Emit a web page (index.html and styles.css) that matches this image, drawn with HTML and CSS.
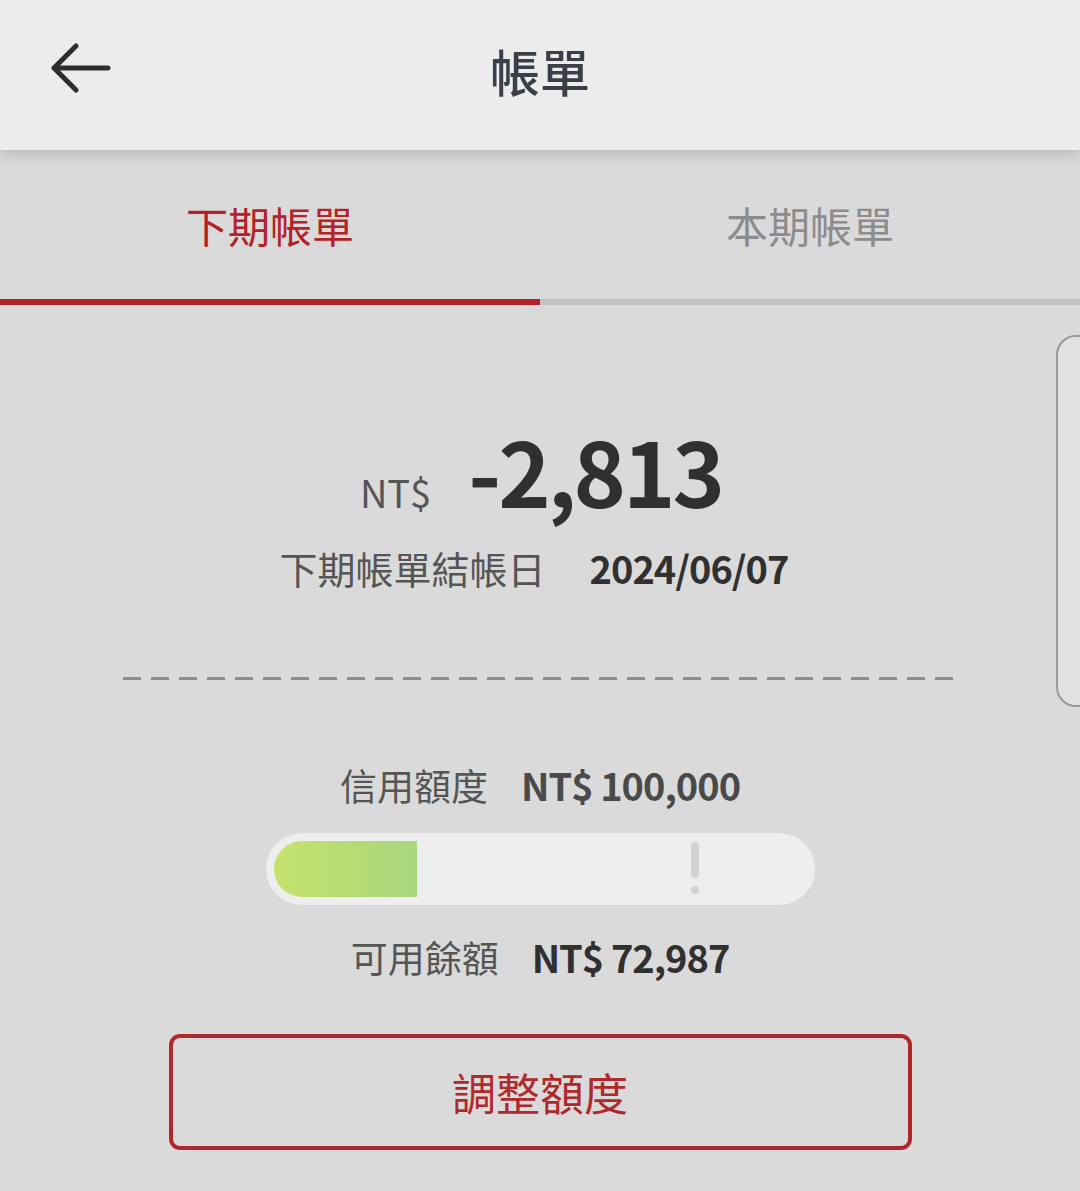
FILE: index.html
```html
<!DOCTYPE html>
<html lang="zh-Hant">
<head>
    <meta charset="UTF-8">
    <meta name="viewport" content="width=device-width, initial-scale=1.0">
    <title>帳單</title>
    <link rel="stylesheet" href="styles.css">
</head>
<body>
    <header class="topbar">
        <div class="topbar-left">
            <svg class="back-icon" width="60" height="50" viewBox="0 0 60 50">
                <path d="M3 25 H57 M25 3 L3 25 L25 47" fill="none" stroke="#2e2e2e" stroke-width="5" stroke-linecap="round" stroke-linejoin="round"/>
            </svg>
        </div>
        <h1 class="title">帳單</h1>
        <div></div>
    </header>

    <nav class="tabs">
        <div class="tab active">下期帳單</div>
        <div class="tab">本期帳單</div>
    </nav>

    <main class="content">
        <div class="peek-card"></div>

        <div class="amount-row">
            <span class="currency">NT$</span>
            <span class="amount">-2,813</span>
        </div>
        <div class="due-row">
            <span class="label">下期帳單結帳日</span>
            <span class="value">2024/06/07</span>
        </div>

        <div class="divider"></div>

        <div class="limit-row">
            <span class="label">信用額度</span>
            <span class="value muted">NT$ 100,000</span>
        </div>
        <div class="bar">
            <div class="bar-fill" style="width: 27%"></div>
            <span class="bar-mark"></span>
        </div>
        <div class="limit-row">
            <span class="label">可用餘額</span>
            <span class="value">NT$ 72,987</span>
        </div>

        <button class="adjust-btn">調整額度</button>
    </main>
</body>
</html>
```

FILE: styles.css
```css
body {
    margin: 0;
    font-family: "Noto Sans CJK TC", "Noto Sans", sans-serif;
    background-color: #dadada;
    color: #333;
    width: 1080px;
    height: 1191px;
    overflow: hidden;
}
.topbar {
    height: 150px;
    background-color: #ececec;
    display: grid;
    grid-template-columns: 1fr auto 1fr;
    align-items: center;
    box-shadow: 0 4px 14px rgba(0, 0, 0, 0.16);
    position: relative;
    z-index: 2;
}
.topbar-left {
    padding-left: 51px;
    display: flex;
    align-items: center;
    padding-bottom: 14px;
}
.title {
    margin: 0;
    font-size: 50px;
    font-weight: 500;
    color: #3a4048;
    line-height: 1;
    padding-bottom: 10px;
}
.tabs {
    display: flex;
    height: 155px;
}
.tab {
    flex: 1;
    display: flex;
    align-items: center;
    justify-content: center;
    font-size: 42px;
    color: #8c8c8c;
    border-bottom: 6px solid #c2c2c2;
}
.tab.active {
    color: #b52226;
    border-bottom-color: #b52226;
}
.content {
    position: relative;
    display: flex;
    flex-direction: column;
    align-items: center;
    padding-top: 120px;
}
.peek-card {
    position: absolute;
    top: 30px;
    right: -30px;
    width: 50px;
    height: 368px;
    border: 2px solid #999;
    border-radius: 20px;
    background-color: #e1e1e1;
}
.amount-row {
    display: flex;
    align-items: baseline;
    gap: 37px;
    line-height: 1;
    margin-left: 2px;
}
.currency {
    font-size: 38px;
    color: #555;
}
.amount {
    font-size: 89px;
    font-weight: 700;
    color: #303030;
    letter-spacing: -3px;
}
.due-row {
    display: flex;
    align-items: baseline;
    gap: 44px;
    margin-top: 35px;
    margin-left: -12px;
    line-height: 1;
}
.label {
    font-size: 37px;
    color: #555;
}
.due-row .label {
    font-size: 38px;
}
.value {
    font-size: 38px;
    font-weight: 700;
    color: #303030;
    letter-spacing: -1px;
}
.value.muted {
    color: #4a4a4a;
}
.divider {
    width: 840px;
    height: 3px;
    margin-top: 90px;
    margin-left: 6px;
    background-image: linear-gradient(to right, #8c8c8c 18px, transparent 18px);
    background-size: 28px 3px;
}
.limit-row {
    display: flex;
    align-items: baseline;
    gap: 33px;
    line-height: 1;
}
.divider + .limit-row {
    margin-top: 86px;
}
.bar {
    position: relative;
    width: 549px;
    height: 72px;
    margin-top: 29px;
    margin-bottom: 33px;
    background-color: #eeeeee;
    border-radius: 36px;
    padding: 8px;
    box-sizing: border-box;
}
.bar-fill {
    height: 100%;
    border-radius: 28px 0 0 28px;
    background: linear-gradient(to right, #c3e36c, #a9d67e);
}
.bar-mark {
    position: absolute;
    left: 425px;
    top: 9px;
    width: 8px;
    height: 36px;
    border-radius: 4px;
    background-color: #d2d2d2;
}
.bar-mark::after {
    content: "";
    position: absolute;
    left: 0;
    top: 44px;
    width: 8px;
    height: 8px;
    border-radius: 50%;
    background-color: #d2d2d2;
}
.adjust-btn {
    margin-top: 58px;
    width: 743px;
    height: 116px;
    border: 4px solid #b0282a;
    border-radius: 11px;
    background: transparent;
    color: #b0282a;
    font-family: inherit;
    font-size: 44px;
    cursor: pointer;
}
```
